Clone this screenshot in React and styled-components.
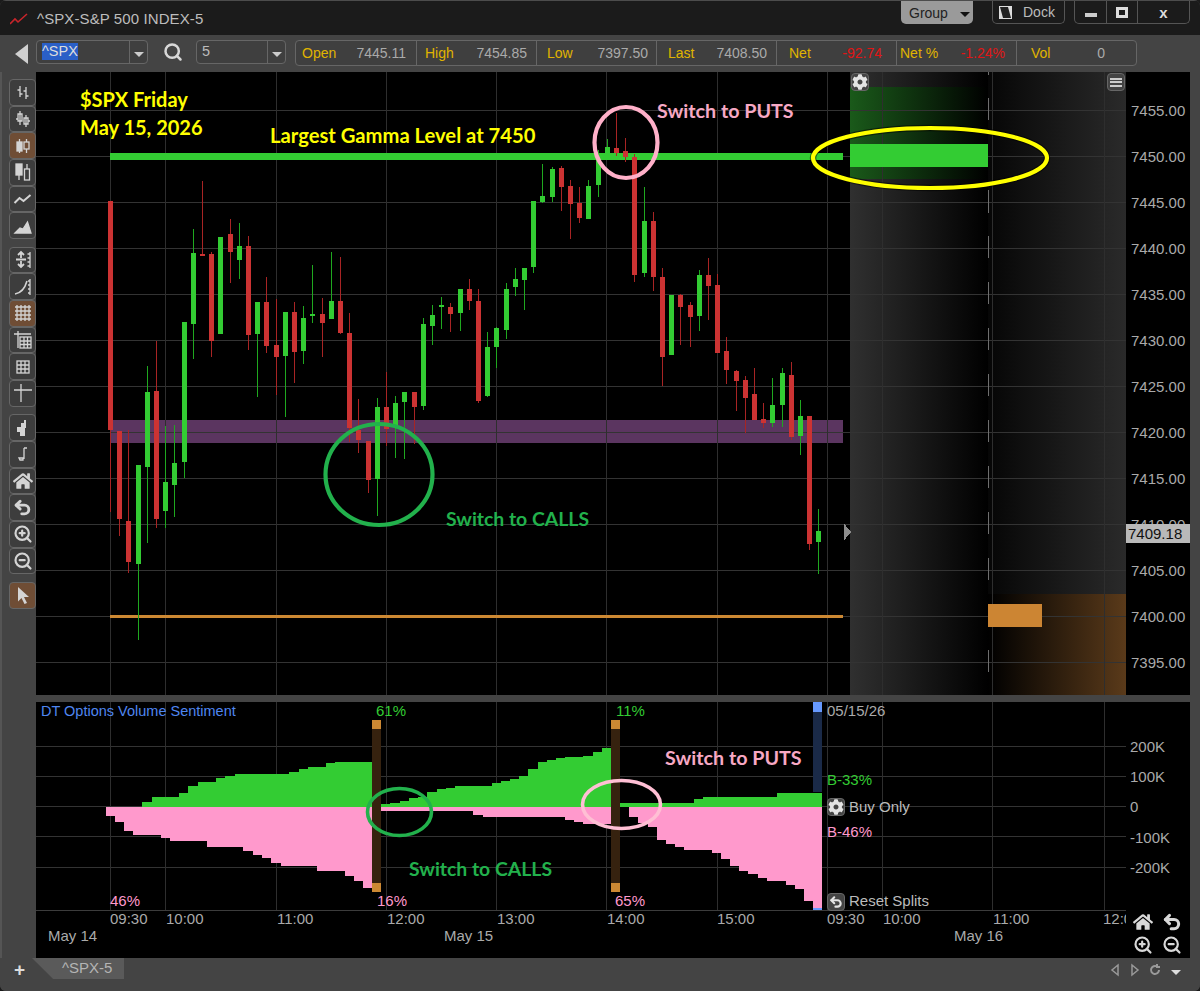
import React from 'react'
import styled, { createGlobalStyle } from 'styled-components'
import { Search, ZoomIn, ZoomOut, Undo2 } from 'lucide-react'
import { FaCog, FaHome } from 'react-icons/fa'

const GlobalStyle = createGlobalStyle`
  html, body { margin: 0; padding: 0; background: #1b1b1b; overflow: hidden; }
  * { box-sizing: border-box; }
`

const UI_FONT = '"Liberation Sans", Arial, sans-serif'
const NOTE_FONT = 'Lato, "Open Sans", sans-serif'

const Window = styled.div`
  width: 1200px;
  height: 991px;
  display: flex;
  flex-direction: column;
  background: #444;
  border-radius: 6px;
  overflow: hidden;
  font-family: ${UI_FONT};
  font-size: 15px;
  color: #aaa;
`
const TitleBar = styled.div`
  height: 35px;
  flex: none;
  display: flex;
  align-items: flex-start;
  background: #1b1b1b;
  border-top: 1px solid #4c4c4c;
  padding: 0 10px 0 10px;
`
const AppMark = styled.svg`
  width: 18px;
  height: 14px;
  margin: 11px 9px 0 0;
`
const Title = styled.div`
  margin-top: 9px;
  color: #bdbdbd;
  font-size: 15px;
  letter-spacing: 0.1px;
`
const GroupButton = styled.div`
  margin-left: auto;
  width: 72px;
  height: 23px;
  display: flex;
  align-items: center;
  padding-left: 8px;
  gap: 12px;
  background: #9a9a9a;
  color: #222;
  font-size: 14px;
  border-radius: 0 0 5px 5px;
`
const Caret = styled.div`
  width: 0;
  height: 0;
  margin-top: 4px;
  border-left: 5px solid transparent;
  border-right: 5px solid transparent;
  border-top: 5px solid ${p => p.$color || '#111'};
`
const DockButton = styled.div`
  margin-left: 19px;
  width: 73px;
  height: 23px;
  display: flex;
  align-items: center;
  gap: 11px;
  padding-left: 6px;
  border: 1px solid #555;
  border-top: 0;
  border-radius: 0 0 5px 5px;
  color: #bbb;
  font-size: 14px;
`
const DockIcon = styled.svg`
  width: 13px;
  height: 13px;
`
const WinButtons = styled.div`
  margin-left: 9px;
  width: 116px;
  height: 23px;
  display: grid;
  grid-template-columns: 31px 31px 1fr;
  border: 1px solid #555;
  border-top: 0;
  border-radius: 0 0 5px 5px;
`
const WinButton = styled.div`
  display: flex;
  align-items: center;
  justify-content: center;
  color: #ddd;
  font-weight: 700;
  font-size: 15px;
  & + & { border-left: 1px solid #555; }
`
const MinBar = styled.div`
  width: 12px;
  height: 4px;
  margin-top: 6px;
  background: #ccc;
`
const MaxBox = styled.div`
  width: 12px;
  height: 11px;
  border: 3px solid #ddd;
`

const Toolbar = styled.div`
  height: 37px;
  flex: none;
  display: flex;
  align-items: flex-start;
  background: #444;
  padding: 5px 0 0 15px;
`
const BackArrow = styled.div`
  width: 0;
  height: 0;
  margin: 4px 8px 0 0;
  border-top: 10px solid transparent;
  border-bottom: 10px solid transparent;
  border-right: 13px solid #d0d0d0;
`
const Combo = styled.div`
  width: ${p => p.$width}px;
  height: 24px;
  display: flex;
  border: 1px solid #666;
  border-radius: 4px;
  background: #3f3f3f;
  color: #bbb;
`
const ComboText = styled.div`
  flex: 1;
  padding: 2px 0 0 5px;
  line-height: 17px;
  font-size: 14.5px;
`
const Selected = styled.span`
  display: inline-block;
  background: #2a5fc7;
  color: #ddd;
`
const ComboArrow = styled.div`
  width: 18px;
  border-left: 1px solid #666;
  display: flex;
  align-items: center;
  justify-content: center;
`
const SearchIcon = styled(Search)`
  margin: 2px 13px 0 15px;
  color: #d8d8d8;
`
const Stats = styled.div`
  margin-left: 9px;
  width: 842px;
  height: 26px;
  display: grid;
  grid-template-columns: repeat(7, 1fr);
  border: 1px solid #666;
  border-radius: 4px;
  background: #3f3f3f;
  font-size: 14px;
`
const StatCell = styled.div`
  display: flex;
  align-items: center;
  justify-content: space-between;
  padding: 0 ${p => p.$right}px 0 ${p => p.$left}px;
  & + & { border-left: 1px solid #666; }
`
const StatLabel = styled.span`
  color: #e0b400;
`
const StatValue = styled.span`
  color: ${p => (p.$down ? '#e01515' : '#aaa')};
`

const Body = styled.div`
  flex: 1;
  display: flex;
  min-height: 0;
`
const SideBar = styled.div`
  width: 36px;
  flex: none;
  padding: 7px 0 0 7px;
  display: flex;
  flex-direction: column;
  gap: 7.5px;
  background: #444;
  border-left: 2px solid #555;
`
const ToolGroup = styled.div`
  display: flex;
  flex-direction: column;
`
const ToolButton = styled.div`
  width: 27px;
  height: 26.7px;
  display: flex;
  align-items: center;
  justify-content: center;
  border: 1px solid #666;
  border-radius: 4px;
  background: ${p => (p.$active ? '#6f4d35' : '#3d3d3d')};
  color: #d4d4d4;
`
const ToolSvg = styled.svg`
  width: 20px;
  height: 20px;
  fill: none;
  stroke: currentColor;
  stroke-width: 1.3;
`

const Panels = styled.div`
  flex: 1;
  display: flex;
  flex-direction: column;
  gap: 7px;
  margin-right: 10px;
  min-width: 0;
`
const PanelRow = styled.div`
  height: ${p => p.$height}px;
  flex: none;
  display: flex;
  background: #000;
`
const Plot = styled.div`
  position: relative;
  flex: 1;
  min-width: 0;
`
const PlotSvg = styled.svg`
  display: block;
  width: 100%;
  height: 100%;
`
const Note = styled.text`
  font-family: ${NOTE_FONT};
  font-weight: 700;
  font-size: ${p => p.$size}px;
  fill: ${p => p.$color};
`
const Label = styled.text`
  font-family: ${UI_FONT};
  font-size: ${p => p.$size || 15}px;
  fill: ${p => p.$color || '#aaa'};
`
const OverlayIcon = styled.div`
  position: absolute;
  left: ${p => p.$left}px;
  top: ${p => p.$top}px;
  width: 18px;
  height: 18px;
  display: flex;
  align-items: center;
  justify-content: center;
  background: #444;
  border: 1px solid #666;
  border-radius: 4px;
  color: #e4e4e4;
`
const MenuLines = styled.div`
  width: 12px;
  height: 9px;
  border-top: 2px solid #ccc;
  border-bottom: 2px solid #ccc;
  position: relative;
  &::after {
    content: '';
    position: absolute;
    left: 0;
    right: 0;
    top: 1.5px;
    height: 2px;
    background: #ccc;
  }
`

const PriceAxis = styled.div`
  position: relative;
  width: 64px;
  flex: none;
  padding: 15.7px 0 0 5px;
  display: flex;
  flex-direction: column;
`
const PriceLabel = styled.div`
  height: 46px;
  display: flex;
  align-items: center;
`
const PriceTag = styled.div`
  position: absolute;
  left: 0;
  top: 452px;
  width: 64px;
  height: 19px;
  padding-left: 2px;
  line-height: 19px;
  background: #b9b9b9;
  color: #111;
`
const VolAxis = styled.div`
  width: 64px;
  flex: none;
  padding: 29px 0 0 4px;
  display: flex;
  flex-direction: column;
`
const VolLabel = styled.div`
  height: 30.4px;
  display: flex;
  align-items: center;
`
const AxisTools = styled.div`
  margin-top: auto;
  margin-bottom: 2px;
  display: grid;
  grid-template-columns: 20px 20px;
  grid-auto-rows: 23px;
  column-gap: 9px;
  padding-left: 3px;
  color: #d8d8d8;
  align-items: center;
  justify-items: center;
`

const Footer = styled.div`
  height: 33px;
  flex: none;
  display: flex;
  align-items: flex-start;
  background: #444;
  padding-right: 19px;
`
const AddTab = styled.div`
  width: 32px;
  padding: 2px 0 0 14px;
  color: #ddd;
  font-size: 19px;
  font-weight: 700;
  line-height: 20px;
`
const Tab = styled.div`
  width: 92px;
  height: 21px;
  padding: 1px 0 0 30px;
  background: #5a5a5a;
  color: #b4b4b4;
  line-height: 18px;
  clip-path: polygon(0 0, 100% 0, 100% 100%, 23% 100%);
`
const TabNav = styled.div`
  margin-left: auto;
  margin-top: 5px;
  display: flex;
  align-items: center;
  gap: 8px;
  color: #999;
`
const NavIcon = styled.svg`
  width: 12px;
  height: 14px;
  fill: none;
  stroke: currentColor;
  stroke-width: 1.5;
`
const NavCaret = styled(Caret)`
  margin-left: 2px;
`

// [wick top, body top, body bottom, wick bottom, up?] in page pixels, one per 5 min bar
const CANDLES = [
  [201, 201, 430, 512, 0], [431, 431, 519, 536, 0], [430, 521, 562, 573, 0], [465, 465, 564, 640, 1],
  [366, 392, 467, 543, 1], [341, 391, 519, 528, 0], [426, 482, 511, 528, 1], [425, 463, 485, 517, 1],
  [322, 322, 462, 478, 1], [229, 253, 324, 359, 1], [181, 254, 256, 256, 0], [252, 254, 341, 357, 0],
  [237, 237, 334, 334, 1], [219, 234, 252, 283, 0], [223, 246, 260, 279, 1], [236, 246, 335, 350, 0],
  [302, 302, 334, 397, 1], [277, 302, 346, 353, 0], [299, 345, 357, 395, 0], [312, 312, 356, 417, 1],
  [302, 312, 352, 383, 0], [306, 318, 351, 364, 1], [265, 314, 316, 323, 1], [298, 314, 323, 357, 0],
  [252, 301, 319, 319, 1], [257, 301, 333, 334, 0], [313, 333, 428, 442, 0], [399, 430, 440, 453, 0],
  [441, 441, 480, 493, 0], [398, 407, 479, 516, 1], [372, 407, 429, 446, 0], [396, 403, 425, 458, 1],
  [392, 392, 402, 459, 1], [392, 392, 407, 444, 0], [318, 324, 406, 410, 1], [305, 315, 326, 345, 1],
  [297, 305, 307, 329, 1], [303, 307, 314, 332, 0], [289, 289, 313, 331, 1], [279, 289, 301, 310, 0],
  [289, 301, 401, 403, 0], [332, 347, 396, 397, 1], [327, 328, 347, 368, 1], [283, 289, 330, 339, 1],
  [268, 279, 287, 296, 1], [268, 268, 280, 310, 1], [201, 201, 267, 273, 1], [164, 196, 202, 203, 1],
  [167, 169, 197, 202, 1], [166, 168, 187, 211, 0], [180, 186, 204, 239, 0], [187, 203, 218, 223, 0],
  [180, 186, 219, 219, 1], [150, 160, 185, 197, 1], [139, 147, 153, 153, 1], [113, 148, 153, 156, 0],
  [138, 151, 157, 162, 0], [154, 157, 275, 282, 0], [187, 221, 273, 277, 1], [212, 221, 277, 291, 0],
  [268, 277, 357, 386, 0], [295, 295, 355, 355, 1], [294, 295, 307, 345, 0], [302, 305, 317, 347, 0],
  [270, 275, 316, 331, 1], [258, 275, 286, 320, 0], [274, 285, 353, 353, 0], [337, 351, 370, 384, 0],
  [370, 371, 381, 411, 0], [376, 380, 398, 433, 0], [368, 394, 420, 420, 0], [403, 419, 423, 428, 0],
  [378, 405, 423, 427, 1], [368, 373, 405, 427, 1], [362, 375, 437, 440, 0], [400, 416, 436, 455, 1],
  [416, 416, 544, 550, 0], [509, 531, 542, 574, 1],
]

const GRID_X = [110, 165, 276, 386, 496, 606, 717, 827, 882, 992, 1104]
const PRICE_Y = Array.from({ length: 13 }, (_, i) => 110 + i * 46)
const PRICES = PRICE_Y.map((_, i) => (7455 - i * 5).toFixed(2))

// step outlines: [x0, x1, y]
const GREEN_STEPS = [
  [142, 152, 802], [152, 179, 797], [179, 188, 793], [188, 198, 786], [198, 216, 782], [216, 225, 778],
  [225, 235, 776], [235, 289, 774], [289, 299, 772], [299, 308, 769], [308, 326, 767], [326, 335, 763], [335, 372, 762],
  [381, 390, 804], [390, 400, 803], [400, 409, 801], [409, 418, 798], [418, 427, 797], [427, 437, 792], [437, 446, 789],
  [446, 455, 788], [455, 492, 786], [492, 501, 783], [501, 510, 781], [510, 519, 779], [519, 528, 776], [528, 538, 769],
  [538, 547, 762], [547, 556, 760], [556, 565, 758], [565, 583, 757], [583, 593, 756], [593, 602, 752], [602, 611, 748],
  [620, 694, 803], [694, 703, 799], [703, 777, 797], [777, 822, 793],
]
const PINK_STEPS = [
  [106, 115, 816], [115, 124, 822], [124, 133, 831], [133, 161, 835], [161, 170, 838], [170, 207, 841], [207, 243, 847],
  [243, 253, 851], [253, 262, 855], [262, 271, 858], [271, 281, 863], [281, 317, 866], [317, 345, 871], [345, 354, 876],
  [354, 363, 881], [363, 372, 888],
  [381, 473, 811], [473, 483, 815], [483, 565, 817], [565, 574, 820], [574, 583, 822], [583, 611, 824],
  [620, 629, 807], [629, 638, 817], [638, 648, 823], [648, 657, 827], [657, 666, 840], [666, 675, 844], [675, 684, 847],
  [684, 712, 850], [712, 721, 853], [721, 730, 859], [730, 739, 866], [739, 748, 871], [748, 758, 874], [758, 767, 878],
  [767, 786, 881], [786, 795, 885], [795, 804, 889], [804, 813, 901], [813, 822, 908],
]
const BASE_Y = 807

const TIME_TICKS = [
  ['09:30', 110], ['10:00', 166], ['11:00', 277], ['12:00', 387], ['13:00', 497], ['14:00', 607],
  ['15:00', 717], ['09:30', 827], ['10:00', 883], ['11:00', 993], ['12:00', 1103],
]

const Candle = ({ index, data }) => {
  const [high, top, bottom, low, up] = data
  const x = Math.round(110 + index * 9.2)
  const body = up ? '#33cc33' : '#cc3333'
  const wick = up ? '#1fa81f' : '#a82424'
  return (
    <g>
      <rect x={x} y={high} width={1} height={low - high} fill={wick} />
      <rect x={x - 2} y={top} width={5} height={Math.max(bottom - top, 2)} fill={body} />
    </g>
  )
}

const PriceChart = () => (
  <PlotSvg viewBox="36 72 1090 623" shapeRendering="crispEdges">
    <defs>
      <linearGradient id="shadeLeft">
        <stop offset="0" stopColor="#303030" />
        <stop offset="1" stopColor="#000" />
      </linearGradient>
      <linearGradient id="shadeRight">
        <stop offset="0" stopColor="#060606" />
        <stop offset="1" stopColor="#2a2a2a" />
      </linearGradient>
      <linearGradient id="greenZone">
        <stop offset="0" stopColor="#1a5a1a" />
        <stop offset="1" stopColor="#000" />
      </linearGradient>
      <linearGradient id="orangeZone">
        <stop offset="0" stopColor="#000" />
        <stop offset="1" stopColor="#5a3a1a" />
      </linearGradient>
    </defs>
    <rect x={850} y={72} width={138} height={623} fill="url(#shadeLeft)" />
    <rect x={988} y={72} width={138} height={623} fill="url(#shadeRight)" />
    <rect x={850} y={87} width={138} height={92} fill="url(#greenZone)" />
    <rect x={988} y={594} width={138} height={101} fill="url(#orangeZone)" />
    <rect x={110} y={420} width={733} height={23} fill="#5b3560" />
    {PRICE_Y.map(y => <rect key={y} x={36} y={y} width={1090} height={1} fill="#333" />)}
    {GRID_X.map(x => <rect key={x} x={x} y={72} width={1} height={623} fill="#2e2e2e" />)}
    <path d="M988.5 75V72M988.5 98V120M988.5 190V213M988.5 236V258M988.5 282V304M988.5 328V350M988.5 374V396M988.5 420V442M988.5 466V488M988.5 512V534M988.5 558V580M988.5 650V672" stroke="#6e6e6e" />
    <rect x={110} y={153} width={733} height={7} fill="#33cc33" />
    <rect x={110} y={615} width={733} height={3} fill="#cc8833" />
    {CANDLES.map((c, i) => <Candle key={i} index={i} data={c} />)}
    <rect x={850} y={144} width={138} height={23} fill="#33cc33" />
    <rect x={988} y={604} width={54} height={23} fill="#cc8533" />
    <path d="M843.5 523V541L851 532Z" fill="#8c8c8c" />
    <g shapeRendering="auto" fill="none">
      <ellipse cx={379} cy={474.5} rx={53.500} ry={50.500} stroke="#22b14c" strokeWidth={4.2} />
      <ellipse cx={626} cy={142.5} rx={31.500} ry={35.500} stroke="#ffb0c9" strokeWidth={4.2} />
      <ellipse cx={930} cy={158} rx={117} ry={30} stroke="#000" strokeWidth={6.5} strokeOpacity={0.5} />
      <ellipse cx={930} cy={158} rx={117} ry={30} stroke="#ffff00" strokeWidth={4.2} />
    </g>
    <g shapeRendering="auto">
      <Note x={80} y={107} $color="#ffff00" $size={20}>$SPX Friday</Note>
      <Note x={80} y={135} $color="#ffff00" $size={20}>May 15, 2026</Note>
      <Note x={270} y={143} $color="#ffff00" $size={20.2}>Largest Gamma Level at 7450</Note>
      <Note x={657} y={118} $color="#f7a8c4" $size={19.7}>Switch to PUTS</Note>
      <Note x={446} y={526} $color="#22b14c" $size={19.4}>Switch to CALLS</Note>
    </g>
  </PlotSvg>
)

const SentimentChart = () => (
  <PlotSvg viewBox="36 702 1090 256" shapeRendering="crispEdges">
    {[746, 776, 806, 836, 867].map(y => <rect key={y} x={36} y={y} width={1090} height={1} fill="#333" />)}
    {GRID_X.map(x => <rect key={x} x={x} y={702} width={1} height={208} fill="#2e2e2e" />)}
    <rect x={36} y={910} width={1090} height={1} fill="#3c3c3c" />
    {GREEN_STEPS.map(([a, b, y]) => <rect key={a} x={a} y={y} width={b - a} height={BASE_Y - y} fill="#33cc33" />)}
    {PINK_STEPS.map(([a, b, y]) => <rect key={a} x={a} y={BASE_Y} width={b - a} height={y - BASE_Y} fill="#ff99cc" />)}
    <rect x={372} y={720} width={9} height={172} fill="#36220f" />
    <rect x={611} y={720} width={9} height={172} fill="#36220f" />
    <rect x={372} y={720} width={9} height={9} fill="#cc8833" />
    <rect x={372} y={883} width={9} height={9} fill="#cc8833" />
    <rect x={611} y={720} width={9} height={9} fill="#cc8833" />
    <rect x={611} y={883} width={9} height={9} fill="#cc8833" />
    <rect x={813} y={702} width={9} height={90} fill="#1a2a48" />
    <rect x={813} y={702} width={9} height={10} fill="#6699ff" />
    <rect x={813} y={908} width={9} height={2} fill="#6699ff" />
    <g shapeRendering="auto" fill="none" strokeWidth={3.6}>
      <ellipse cx={399.5} cy={812} rx={32} ry={23.5} stroke="#22b14c" />
      <ellipse cx={621.5} cy={804.5} rx={39} ry={24} stroke="#ffbfd4" />
    </g>
    <g shapeRendering="auto">
      <Label x={41} y={716} $color="#4f86f0" $size={14.5}>DT Options Volume Sentiment</Label>
      <Label x={376} y={716} $color="#33cc33">61%</Label>
      <Label x={616} y={716} $color="#33cc33">11%</Label>
      <Label x={110} y={906} $color="#ff99cc">46%</Label>
      <Label x={377} y={906} $color="#ff99cc">16%</Label>
      <Label x={615} y={906} $color="#ff99cc">65%</Label>
      <Label x={827} y={716}>05/15/26</Label>
      <Label x={827} y={785} $color="#33cc33">B-33%</Label>
      <Label x={827} y={837} $color="#ff99cc">B-46%</Label>
      <Label x={849} y={812} $color="#bbb">Buy Only</Label>
      <Label x={849} y={906} $color="#bbb">Reset Splits</Label>
      {TIME_TICKS.map(([t, x]) => <Label key={x} x={x} y={924}>{t}</Label>)}
      <Label x={48} y={941}>May 14</Label>
      <Label x={444} y={941}>May 15</Label>
      <Label x={954} y={941}>May 16</Label>
      <Note x={665} y={765} $color="#f7a8c4" $size={19.7}>Switch to PUTS</Note>
      <Note x={409} y={876} $color="#22b14c" $size={19.4}>Switch to CALLS</Note>
    </g>
  </PlotSvg>
)

const TOOL_ICONS = [
  <path d="M7 4v11M4.5 8H7M7 12h2.5M13 5v12M10.5 9H13M13 14h2.5" />,
  <path d="M7 2v14M5 5h4v7H5zM13 6v12M11 9h4v6h-4zM3 10h2M15 12h2" />,
  <g><path d="M6.5 3v14M13.5 3v14" /><rect x="4" y="6" width="5" height="9" fill="currentColor" /><rect x="11" y="6" width="5" height="7" fill="#6f4d35" /></g>,
  <g><rect x="3" y="2" width="6" height="11" fill="currentColor" /><path d="M6 13v5M14 2v5" /><rect x="11.5" y="7" width="5" height="11" /></g>,
  <path d="M1.5 14l5-5 4 3 7-6" strokeWidth="2" />,
  <path d="M2 17l5-5 3 1 4.5-7L18 17z" fill="currentColor" />,
  <g><path d="M8 2v6M8 11v6M5 5l3-3 3 3M5 14l3 3 3-3M3 9.5h10" strokeWidth="1.8" /><path d="M17 2v16M14.5 4H17M14.5 8H17M14.5 12H17M14.5 16H17" /></g>,
  <g><path d="M2 17c6-1 10-6 12-13" strokeWidth="1.6" /><path d="M17 2v16M15 4h2M15 8h2M15 12h2M15 16h2" /></g>,
  <path d="M4 2v16M8 2v16M12 2v16M16 2v16M2 4h16M2 8h16M2 12h16M2 16h16" />,
  <g><path d="M1 4h17M5 1v17" /><rect x="7" y="7" width="11" height="11" /><path d="M7 11h11M7 14.5h11M11 7v11M14.5 7v11" /></g>,
  <g><rect x="4" y="4" width="12" height="12" /><path d="M4 8h12M4 12h12M8 4v12M12 4v12" /></g>,
  <path d="M1 7h18M8 1v18" />,
  <path d="M8 14h4v4H7v-4H4V9h4V5h3V2h2v8h-1v4z" fill="currentColor" stroke="none" />,
  <path d="M11 4v11M11 4h3M6 14h4v2H7z" />,
]

const CursorIcon = () => (
  <ToolSvg viewBox="0 0 20 20">
    <path d="M5 2l11 10h-5l3 6-2.500 1-3-6-3.500 3.500z" fill="currentColor" stroke="none" />
  </ToolSvg>
)

const Tool = ({ active, children }) => (
  <ToolButton $active={active}>{children}</ToolButton>
)
const DrawnTool = ({ index, active }) => (
  <Tool active={active}><ToolSvg viewBox="0 0 20 20">{TOOL_ICONS[index]}</ToolSvg></Tool>
)

const STATS = [
  ['Open', '7445.11', 6, 10],
  ['High', '7454.85', 8, 9],
  ['Low', '7397.50', 10, 8],
  ['Last', '7408.50', 11, 9],
  ['Net', '-92.74', 12, 14, true],
  ['Net %', '-1.24%', 3, 11, true],
  ['Vol', '0', 14, 31],
]

function App() {
  return (
    <Window>
      <GlobalStyle />
      <TitleBar>
        <AppMark viewBox="0 0 18 14">
          <path d="M0 12l5-5 3 3 9-8" fill="none" stroke="#c8252b" strokeWidth="1.6" />
        </AppMark>
        <Title>^SPX-S&amp;P 500 INDEX-5</Title>
        <GroupButton>Group<Caret /></GroupButton>
        <DockButton>
          <DockIcon viewBox="0 0 13 13">
            <rect width="13" height="13" fill="#ddd" />
            <path d="M1 1h8l3 11H4z" fill="#222" />
          </DockIcon>
          Dock
        </DockButton>
        <WinButtons>
          <WinButton><MinBar /></WinButton>
          <WinButton><MaxBox /></WinButton>
          <WinButton>x</WinButton>
        </WinButtons>
      </TitleBar>

      <Toolbar>
        <BackArrow />
        <Combo $width={112}>
          <ComboText><Selected>^SPX</Selected></ComboText>
          <ComboArrow><Caret $color="#ccc" /></ComboArrow>
        </Combo>
        <SearchIcon size={20} strokeWidth={3} />
        <Combo $width={90}>
          <ComboText>5</ComboText>
          <ComboArrow><Caret $color="#ccc" /></ComboArrow>
        </Combo>
        <Stats>
          {STATS.map(([label, value, left, right, down]) => (
            <StatCell key={label} $left={left} $right={right}>
              <StatLabel>{label}</StatLabel>
              <StatValue $down={down}>{value}</StatValue>
            </StatCell>
          ))}
        </Stats>
      </Toolbar>

      <Body>
        <SideBar>
          <ToolGroup>
            <DrawnTool index={0} />
            <DrawnTool index={1} />
            <DrawnTool index={2} active />
            <DrawnTool index={3} />
            <DrawnTool index={4} />
            <DrawnTool index={5} />
          </ToolGroup>
          <ToolGroup>
            <DrawnTool index={6} />
            <DrawnTool index={7} />
            <DrawnTool index={8} active />
            <DrawnTool index={9} />
            <DrawnTool index={10} />
            <DrawnTool index={11} />
          </ToolGroup>
          <ToolGroup>
            <DrawnTool index={12} />
            <DrawnTool index={13} />
            <Tool><FaHome size={20} /></Tool>
            <Tool><Undo2 size={19} strokeWidth={3.6} /></Tool>
            <Tool><ZoomIn size={20} strokeWidth={2.6} /></Tool>
            <Tool><ZoomOut size={20} strokeWidth={2.6} /></Tool>
          </ToolGroup>
          <ToolGroup>
            <Tool active><CursorIcon /></Tool>
          </ToolGroup>
        </SideBar>

        <Panels>
          <PanelRow $height={623}>
            <Plot>
              <PriceChart />
              <OverlayIcon $left={815} $top={1}><FaCog size={16} /></OverlayIcon>
              <OverlayIcon $left={1071} $top={1}><MenuLines /></OverlayIcon>
            </Plot>
            <PriceAxis>
              {PRICES.map(p => <PriceLabel key={p}>{p}</PriceLabel>)}
              <PriceTag>7409.18</PriceTag>
            </PriceAxis>
          </PanelRow>
          <PanelRow $height={256}>
            <Plot>
              <SentimentChart />
              <OverlayIcon $left={791} $top={96}><FaCog size={16} /></OverlayIcon>
              <OverlayIcon $left={791} $top={191}><Undo2 size={14} strokeWidth={3.6} /></OverlayIcon>
            </Plot>
            <VolAxis>
              {['200K', '100K', '0', '-100K', '-200K'].map(v => <VolLabel key={v}>{v}</VolLabel>)}
              <AxisTools>
                <FaHome size={20} />
                <Undo2 size={20} strokeWidth={3.6} />
                <ZoomIn size={20} strokeWidth={2.6} />
                <ZoomOut size={20} strokeWidth={2.6} />
              </AxisTools>
            </VolAxis>
          </PanelRow>
        </Panels>
      </Body>

      <Footer>
        <AddTab>+</AddTab>
        <Tab>^SPX-5</Tab>
        <TabNav>
          <NavIcon viewBox="0 0 12 14"><path d="M9 2L3 7l6 5z" /></NavIcon>
          <NavIcon viewBox="0 0 12 14"><path d="M3 2l6 5-6 5z" /></NavIcon>
          <NavIcon viewBox="0 0 12 14"><path d="M10 7a4 4 0 1 1-2-3.500M8 1v3h3" strokeWidth="2" /></NavIcon>
          <NavCaret $color="#ddd" />
        </TabNav>
      </Footer>
    </Window>
  )
}

export default App
